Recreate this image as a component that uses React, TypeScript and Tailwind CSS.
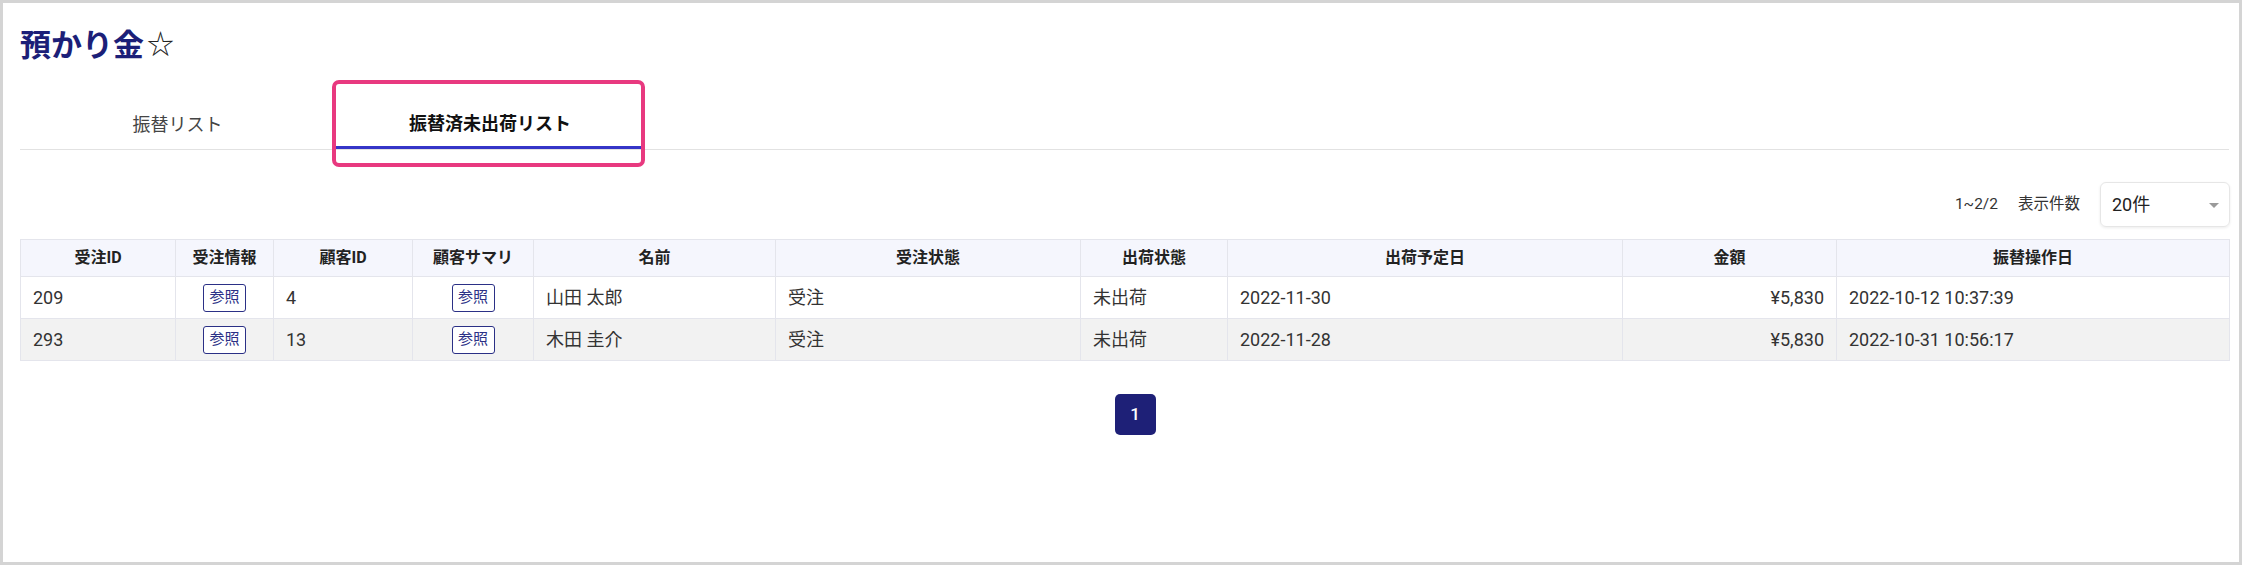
import React from 'react'

const font = { fontFamily: 'Roboto, "Noto Sans CJK JP", sans-serif' }

type Row = { id: string; cid: string; name: string; status: string; ship: string; date: string; amount: string; op: string }

const rows: Row[] = [
  { id: '209', cid: '4', name: '山田 太郎', status: '受注', ship: '未出荷', date: '2022-11-30', amount: '¥5,830', op: '2022-10-12 10:37:39' },
  { id: '293', cid: '13', name: '木田 圭介', status: '受注', ship: '未出荷', date: '2022-11-28', amount: '¥5,830', op: '2022-10-31 10:56:17' },
]

const heads = ['受注ID', '受注情報', '顧客ID', '顧客サマリ', '名前', '受注状態', '出荷状態', '出荷予定日', '金額', '振替操作日']
const widths = [155, 98, 139, 121, 242, 305, 147, 395, 214, 393]

function RefButton() {
  return (
    <span className="inline-flex items-center justify-center w-[43px] h-[28px] border border-[#2b3086] rounded-[3px] bg-white text-[#2b3086] text-[15px] leading-none">参照</span>
  )
}

export default function App() {
  return (
    <div className="relative w-[2242px] h-[565px] border-[3px] border-[#d4d4d4] bg-white pl-[17px] pr-[9px] pt-[24px]" style={font}>
      <h1 className="flex items-center h-[36px] text-[31px] font-bold text-[#1c1f78] leading-none">
        預かり金<span className="text-[27px] font-normal text-[#222] ml-[3px]">☆</span>
      </h1>

      <div className="flex mt-[34px] border-b border-[#e2e2e2] mr-[1px]">
        <div className="w-[315px] h-[52px] flex items-center justify-center text-[18px] text-[#444] pt-[3px]">振替リスト</div>
        <div className="w-[310px] h-[52px] flex items-center justify-center text-[18px] font-bold text-[#111] pt-[3px] border-b-[3px] border-[#3535c8]">振替済未出荷リスト</div>
      </div>

      <div className="absolute left-[329px] top-[77px] w-[313px] h-[87px] border-[4px] border-[#e8397f] rounded-[7px] pointer-events-none" />

      <div className="flex justify-end items-center mt-[32px] text-[15.5px] text-[#333]">
        <span>1~2/2</span>
        <span className="ml-[20px]">表示件数</span>
        <div className="relative ml-[20px] w-[130px] h-[45px] border border-[#e6e6e6] rounded-[6px] shadow-[0_1px_3px_rgba(0,0,0,0.08)] flex items-center pl-[11px] text-[18px] text-[#222]">
          20件
          <span className="absolute right-[10px] top-[20px] w-0 h-0 border-l-[5px] border-r-[5px] border-t-[5px] border-l-transparent border-r-transparent border-t-[#9a9a9a]" />
        </div>
      </div>

      <table className="mt-[12px] border-collapse table-fixed w-[2209px] text-[#333]">
        <colgroup>
          {widths.map((w, i) => <col key={i} style={{ width: w }} />)}
        </colgroup>
        <thead>
          <tr className="bg-[#f5f6fd]">
            {heads.map(h => (
              <th key={h} className="h-[37px] border border-[#e4e5ec] text-[16px] font-bold text-[#222] text-center">{h}</th>
            ))}
          </tr>
        </thead>
        <tbody>
          {rows.map((r, i) => (
            <tr key={r.id} className={i % 2 === 1 ? 'bg-[#f2f2f2]' : 'bg-white'}>
              <td className="h-[42px] border border-[#e4e5ec] px-[12px] text-[18px]">{r.id}</td>
              <td className="border border-[#e4e5ec] text-center"><RefButton /></td>
              <td className="border border-[#e4e5ec] px-[12px] text-[18px]">{r.cid}</td>
              <td className="border border-[#e4e5ec] text-center"><RefButton /></td>
              <td className="border border-[#e4e5ec] px-[12px] text-[18px]">{r.name}</td>
              <td className="border border-[#e4e5ec] px-[12px] text-[18px]">{r.status}</td>
              <td className="border border-[#e4e5ec] px-[12px] text-[18px]">{r.ship}</td>
              <td className="border border-[#e4e5ec] px-[12px] text-[18px]">{r.date}</td>
              <td className="border border-[#e4e5ec] px-[12px] text-[18px] text-right">{r.amount}</td>
              <td className="border border-[#e4e5ec] px-[12px] text-[18px]">{r.op}</td>
            </tr>
          ))}
        </tbody>
      </table>

      <div className="flex justify-center mt-[33px] pl-[20px]">
        <button className="w-[41px] h-[41px] rounded-[5px] bg-[#1e2077] text-white text-[17px] font-medium">1</button>
      </div>
    </div>
  )
}
